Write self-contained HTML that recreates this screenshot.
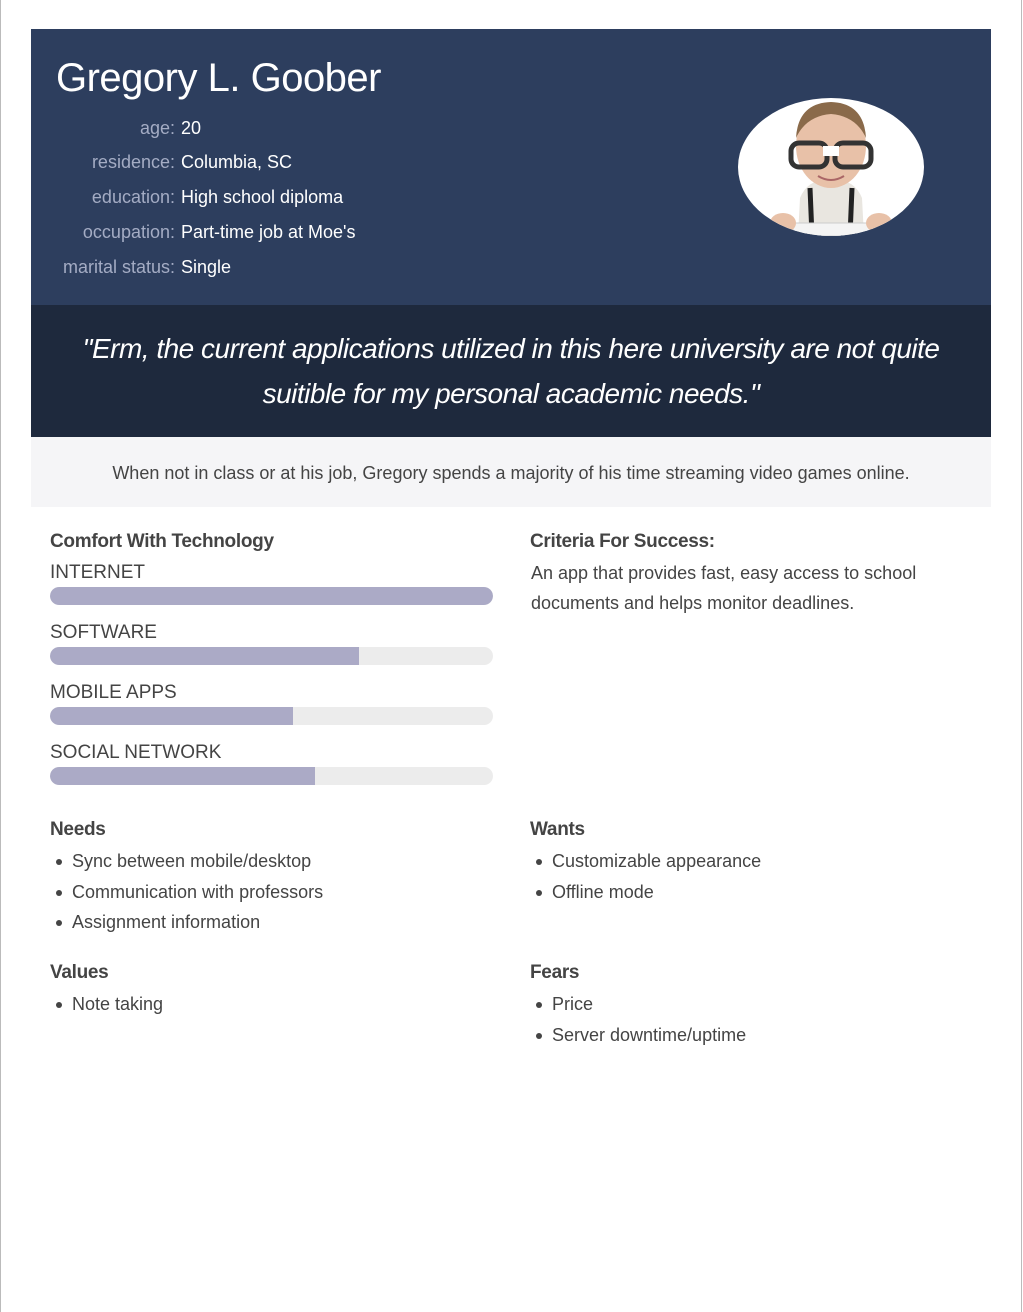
<!DOCTYPE html>
<html><head><style>
*{margin:0;padding:0;box-sizing:border-box}
body{width:1023px;height:1312px;background:#fff;font-family:"Liberation Sans",sans-serif;position:relative;overflow:hidden;color:#4a4a4a}
.bl{position:absolute;top:0;bottom:0;width:1px;background:#bbb}
.hdr{position:absolute;left:31px;top:29px;width:960px;height:276px;background:#2d3e5e}
h1{position:absolute;left:25px;top:27px;font-size:40px;font-weight:normal;color:#fff;letter-spacing:-0.5px}
.row{position:absolute;left:0;width:960px;font-size:18px;height:20px}
.row .k{position:absolute;right:816px;color:#a4acc4;white-space:nowrap;text-align:right}
.row .v{position:absolute;left:150px;color:#fff;white-space:nowrap}
.pic{position:absolute;left:707px;top:69px;width:186px;height:138px;border-radius:50%;background:#fff;overflow:hidden}
.quote{position:absolute;left:31px;top:305px;width:960px;height:132px;background:#1e293d;color:#fff;font-style:italic;font-size:28px;text-align:center;line-height:45px;padding-top:21px;letter-spacing:-0.5px}
.sum{position:absolute;left:31px;top:437px;width:960px;height:70px;background:#f5f5f7;text-align:center;font-size:18px;line-height:72px;color:#444}
h3{position:absolute;font-size:19px;font-weight:bold;color:#444;letter-spacing:-0.3px}
.lab{position:absolute;left:50px;font-size:19px;color:#444}
.bar{position:absolute;left:50px;width:443px;height:18px;border-radius:9px;background:#ececec;overflow:hidden}
.bar i{display:block;height:100%;background:#abaac6;border-radius:9px 0 0 9px}
.txt{position:absolute;font-size:18px;line-height:30px;color:#444}
ul{position:absolute;list-style:none;font-size:18px;line-height:30.5px;color:#444}
ul li{padding-left:22px;position:relative}
ul li:before{content:"";position:absolute;left:6px;top:13px;width:6px;height:6px;border-radius:50%;background:#444}
</style></head><body>
<div class="bl" style="left:0"></div><div class="bl" style="left:1021px"></div>
<div class="hdr">
<h1>Gregory L. Goober</h1>
<div class="row" style="top:89px"><span class="k">age:</span><span class="v">20</span></div>
<div class="row" style="top:123px"><span class="k">residence:</span><span class="v">Columbia, SC</span></div>
<div class="row" style="top:158px"><span class="k">education:</span><span class="v">High school diploma</span></div>
<div class="row" style="top:193px"><span class="k">occupation:</span><span class="v">Part-time job at Moe's</span></div>
<div class="row" style="top:228px"><span class="k">marital status:</span><span class="v">Single</span></div>
<div class="pic"><svg width="186" height="138" viewBox="0 0 186 138">
<path d="M60 138 L62 100 Q70 80 93 82 Q116 80 124 100 L126 138Z" fill="#e9e6e0"/>
<path d="M72 90 L74 138 M114 90 L112 138" stroke="#222" stroke-width="5"/>
<ellipse cx="93" cy="48" rx="35" ry="42" fill="#e8c1a8"/>
<path d="M58 40 Q60 5 93 4 Q126 5 128 40 Q118 18 93 16 Q68 18 58 40Z" fill="#8a6a4a"/>
<rect x="53" y="45" width="36" height="24" rx="8" fill="none" stroke="#333" stroke-width="5"/>
<rect x="97" y="45" width="36" height="24" rx="8" fill="none" stroke="#333" stroke-width="5"/>
<rect x="85" y="48" width="16" height="10" fill="#fff"/>
<path d="M80 78 Q93 86 106 78" stroke="#a66" stroke-width="2" fill="none"/>
<rect x="55" y="125" width="80" height="13" fill="#f4f4f4" stroke="#ccc"/>
<ellipse cx="45" cy="125" rx="13" ry="10" fill="#e8c1a8"/><ellipse cx="141" cy="125" rx="13" ry="10" fill="#e8c1a8"/>
</svg></div>
</div>
<div class="quote">"Erm, the current applications utilized in this here university are not quite<br>suitible for my personal academic needs."</div>
<div class="sum">When not in class or at his job, Gregory spends a majority of his time streaming video games online.</div>
<h3 style="left:50px;top:531px">Comfort With Technology</h3>
<div class="lab" style="top:562px">INTERNET</div><div class="bar" style="top:587px"><i style="width:100%;border-radius:9px"></i></div>
<div class="lab" style="top:622px">SOFTWARE</div><div class="bar" style="top:647px"><i style="width:309px"></i></div>
<div class="lab" style="top:682px">MOBILE APPS</div><div class="bar" style="top:707px"><i style="width:243px"></i></div>
<div class="lab" style="top:742px">SOCIAL NETWORK</div><div class="bar" style="top:767px"><i style="width:265px"></i></div>
<h3 style="left:530px;top:531px">Criteria For Success:</h3>
<div class="txt" style="left:531px;top:558px;width:440px">An app that provides fast, easy access to school documents and helps monitor deadlines.</div>
<h3 style="left:50px;top:819px">Needs</h3>
<ul style="left:50px;top:846px"><li>Sync between mobile/desktop</li><li>Communication with professors</li><li>Assignment information</li></ul>
<h3 style="left:530px;top:819px">Wants</h3>
<ul style="left:530px;top:846px"><li>Customizable appearance</li><li>Offline mode</li></ul>
<h3 style="left:50px;top:962px">Values</h3>
<ul style="left:50px;top:989px"><li>Note taking</li></ul>
<h3 style="left:530px;top:962px">Fears</h3>
<ul style="left:530px;top:989px"><li>Price</li><li>Server downtime/uptime</li></ul>
</body></html>
